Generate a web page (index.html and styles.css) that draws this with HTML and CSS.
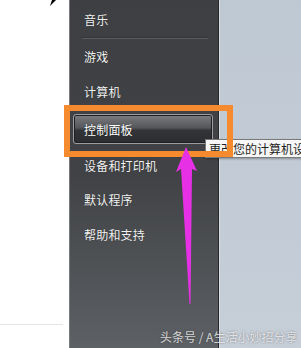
FILE: index.html
```html
<!DOCTYPE html>
<html>
<head>
<meta charset="utf-8">
<link rel="stylesheet" href="styles.css">
</head>
<body>
<div class="screen">
  <div class="desk">
    <div class="desk-line"></div>
  </div>
  <div class="panel">
    <div class="item first">音乐</div>
    <div class="sep"></div>
    <div class="item">游戏</div>
    <div class="item">计算机</div>
    <div class="item btn-row"><div class="btn">控制面板</div></div>
    <div class="item short">设备和打印机</div>
    <div class="item">默认程序</div>
    <div class="item">帮助和支持</div>
  </div>
  <div class="side"></div>

  <svg class="cursor" width="8" height="8" viewBox="0 0 8 8"><polygon points="0,6 6,0 2,0" fill="#000"/></svg>
  <div class="tooltip">更改您的计算机设置</div>
  <div class="frame"></div>
  <svg class="arrow" width="301" height="348" viewBox="0 0 301 348">
    <polygon points="186,147 197,171 192,169 190.5,304 189.5,304 181,169 176,172" fill="#e630e6"/>
  </svg>
  <div class="mark">头条号 / A生活小妙招分享</div>
</div>
</body>
</html>
```
FILE: styles.css
```css
html, body {
  margin: 0;
  padding: 0;
}
body {
  width: 301px;
  height: 348px;
  overflow: hidden;
  font-family: "Noto Sans CJK SC", "Noto Sans", sans-serif;
}
.screen {
  position: relative;
  display: flex;
  width: 301px;
  height: 348px;
  overflow: hidden;
}
.desk {
  width: 69px;
  flex: none;
  background: #ffffff;
  padding-top: 324px;
  box-sizing: border-box;
}
.desk-line {
  width: 63px;
  height: 1px;
  background: #e2e4e6;
}
.panel {
  width: 150px;
  flex: none;
  box-sizing: border-box;
  border-left: 1px solid #77797c;
  border-right: 1px solid #26272a;
  background: linear-gradient(#3d3f42 0%, #404245 50%, #5d6064 100%);
  display: flex;
  flex-direction: column;
  padding-top: 1px;
}
.item {
  height: 35px;
  display: flex;
  align-items: center;
  padding-left: 14px;
  color: #f2f2f2;
  font-size: 12px;
  letter-spacing: 0.2px;
  text-shadow: 0 0 1px rgba(0,0,0,0.5);
}
.item.first {
  height: 36px;
}
.item.short {
  height: 33px;
}
.sep {
  margin: 0 10px 0 12px;
  height: 1px;
  border-top: 1px solid #34363a;
  background: #5a5c60;
}
.btn-row {
  height: 40px;
  padding-left: 3px;
}
.btn {
  width: 140px;
  height: 30px;
  box-sizing: border-box;
  border: 1px solid #9a9c9f;
  border-radius: 3px;
  box-shadow: inset 0 0 0 1px #1e2022;
  background: linear-gradient(#7a7c80 0%, #55575b 45%, #323437 55%, #2b2d30 100%);
  display: flex;
  align-items: center;
  padding-left: 10px;
  color: #ffffff;
}
.side {
  flex: 1;
  border-left: 1px solid #d9dee4;
  background: linear-gradient(#bec8d3 0%, #c6ced8 100%);
}
.cursor {
  position: absolute;
  left: 50px;
  top: 0;
}
.tooltip {
  position: absolute;
  left: 205px;
  top: 139px;
  width: 110px;
  height: 19px;
  box-sizing: border-box;
  background: #f7f7f7;
  border: 1px solid #7a7a7a;
  box-shadow: 1px 1px 2px rgba(0,0,0,0.3);
  color: #1e1e1e;
  font-size: 12px;
  line-height: 17px;
  padding-left: 3px;
  white-space: nowrap;
}
.frame {
  position: absolute;
  left: 64px;
  top: 105px;
  width: 169px;
  height: 52px;
  box-sizing: border-box;
  border: 6px solid #f68a2e;
}
.arrow {
  position: absolute;
  left: 0;
  top: 0;
}
.mark {
  position: absolute;
  left: 160px;
  top: 329px;
  font-size: 12px;
  line-height: 16px;
  color: rgba(245,245,245,0.8);
  text-shadow: 0 0 2px rgba(60,60,60,0.6);
  white-space: nowrap;
}
```
